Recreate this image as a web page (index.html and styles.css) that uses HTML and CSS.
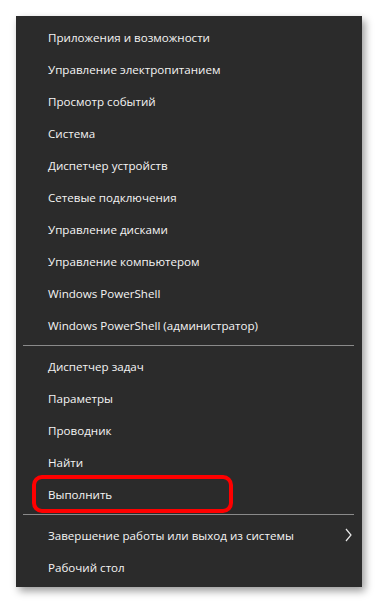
FILE: index.html
```html
<!DOCTYPE html>
<html>
<head>
  <meta charset="utf-8">
  <title>Win+X</title>
  <link rel="stylesheet" href="styles.css">
</head>
<body>
  <div class="menu">
    <div class="item">Приложения и возможности</div>
    <div class="item">Управление электропитанием</div>
    <div class="item">Просмотр событий</div>
    <div class="item">Система</div>
    <div class="item">Диспетчер устройств</div>
    <div class="item">Сетевые подключения</div>
    <div class="item">Управление дисками</div>
    <div class="item">Управление компьютером</div>
    <div class="item">Windows PowerShell</div>
    <div class="item">Windows PowerShell (администратор)</div>
    <div class="sep"></div>
    <div class="item">Диспетчер задач</div>
    <div class="item">Параметры</div>
    <div class="item">Проводник</div>
    <div class="item">Найти</div>
    <div class="item marked">Выполнить</div>
    <div class="sep"></div>
    <div class="item has-sub">
      <span>Завершение работы или выход из системы</span>
      <svg class="chevron" viewBox="0 0 7 14"><path d="M1 1 L6 7 L1 13" /></svg>
    </div>
    <div class="item">Рабочий стол</div>
  </div>
</body>
</html>
```

FILE: styles.css
```css
body {
  margin: 0;
  width: 378px;
  height: 604px;
  background-color: #fff;
  font-family: "Open Sans", "Noto Sans", Arial, sans-serif;
}
.menu {
  margin: 16px 0 0 16px;
  width: 346px;
  height: 571px;
  box-sizing: border-box;
  padding: 5px 0 3px 0;
  background-color: #2b2b2b;
  box-shadow: 3px 4px 8px rgba(0, 0, 0, 0.4);
}
.item {
  position: relative;
  height: 32px;
  display: flex;
  align-items: center;
  padding-left: 32px;
  padding-right: 10px;
  color: #f4f4f4;
  font-size: 11.6px;
}
.sep {
  height: 1px;
  margin: 4px 8px 4px 7px;
  background-color: #8a8a8a;
}
/* red highlight round "Выполнить" */
.marked::before {
  content: "";
  position: absolute;
  left: 16px;
  top: -3px;
  width: 201px;
  height: 38px;
  box-sizing: border-box;
  border: 4px solid #ff0000;
  border-radius: 10px;
}
.has-sub {
  justify-content: space-between;
}
.chevron {
  width: 7px;
  height: 14px;
}
.chevron path {
  fill: none;
  stroke: #e8e8e8;
  stroke-width: 1.2;
}
```
